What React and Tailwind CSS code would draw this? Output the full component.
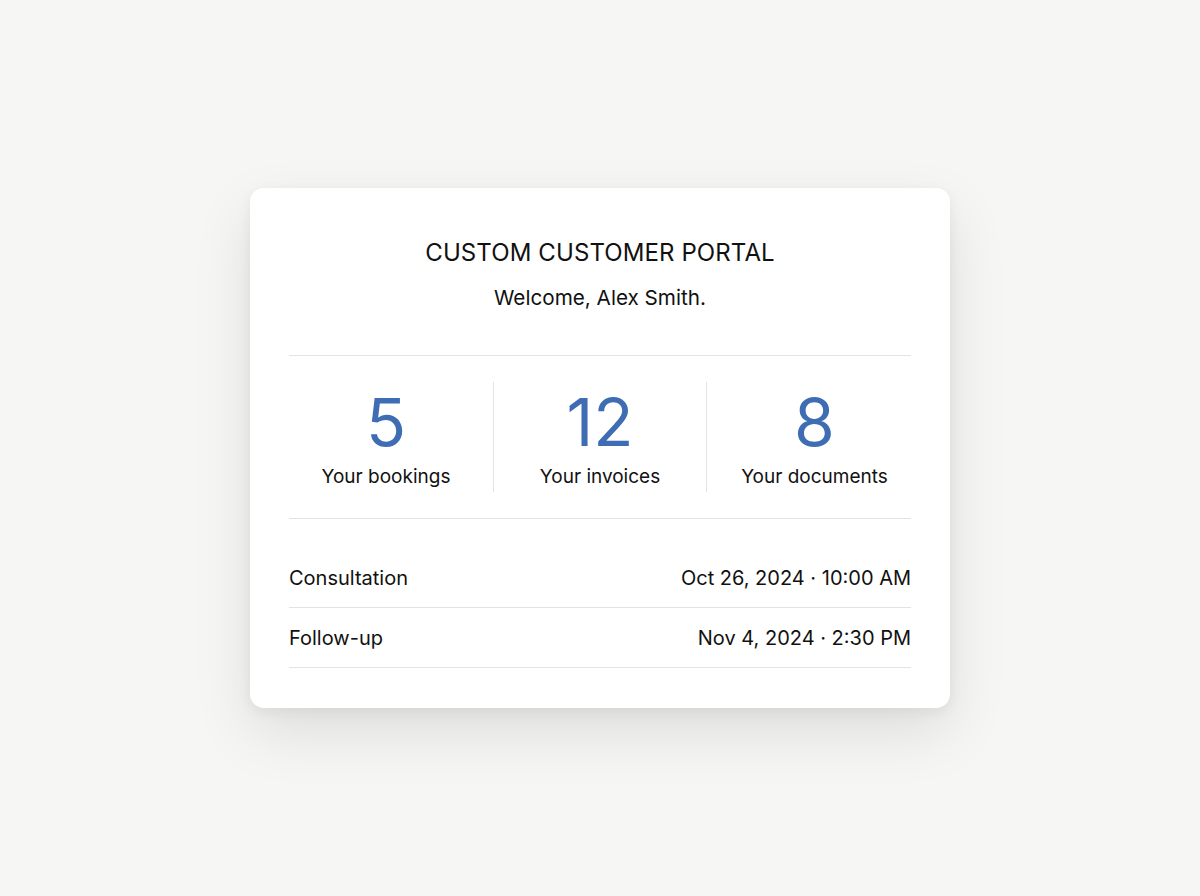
export default function App() {
  const stats = [
    { value: "5", label: "Your bookings", cls: "pr-[10px]" },
    { value: "12", label: "Your invoices", cls: "border-x border-[#e3e3e3]" },
    { value: "8", label: "Your documents", cls: "pl-[11px]" },
  ];
  const rows = [
    { name: "Consultation", when: "Oct 26, 2024 · 10:00 AM" },
    { name: "Follow-up", when: "Nov 4, 2024 · 2:30 PM" },
  ];
  return (
    <div
      className="min-h-screen w-full flex items-center justify-center bg-[#f6f7f5] text-[#111111]"
      style={{ fontFamily: "Inter, 'Noto Sans', sans-serif" }}
    >
      <div className="w-[700px] bg-white rounded-[14px] px-[39px] pt-[49px] pb-[40px] shadow-[0_24px_60px_rgba(0,0,0,0.10),0_4px_14px_rgba(0,0,0,0.06)]">
        <h1 className="text-center text-[24px] leading-[32px] font-normal tracking-[0.1px]">
          CUSTOM CUSTOMER PORTAL
        </h1>
        <p className="mt-[15px] text-center text-[20.7px] leading-[28px]">
          Welcome, Alex Smith.
        </p>
        <div className="mt-[43px] border-y border-[#e3e3e3] py-[26px]">
          <div className="grid grid-cols-[204px_214px_1fr]">
            {stats.map((s) => (
              <div key={s.label} className={`flex flex-col items-center pt-[7px] pb-[1px] ${s.cls}`}>
                <div className="text-[66px] leading-[66px] text-[#3f6db3] font-normal">{s.value}</div>
                <div className="mt-[8px] text-[19px] leading-[28px]">{s.label}</div>
              </div>
            ))}
          </div>
        </div>
        <div className="mt-[29px]">
          {rows.map((r) => (
            <div
              key={r.name}
              className="h-[60px] flex items-center justify-between border-b border-[#e3e3e3] text-[20px]"
            >
              <span>{r.name}</span>
              <span>{r.when}</span>
            </div>
          ))}
        </div>
      </div>
    </div>
  );
}
